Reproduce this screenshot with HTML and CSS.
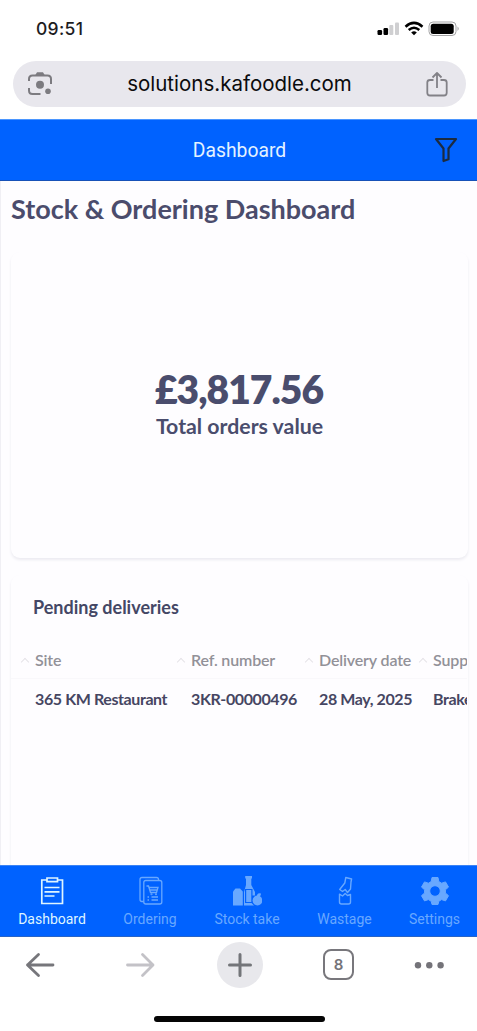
FILE: index.html
```html
<!DOCTYPE html>
<html lang="en">
<head>
<meta charset="utf-8">
<meta name="viewport" content="width=device-width, initial-scale=1">
<title>Dashboard</title>
<link rel="stylesheet" href="styles.css">
</head>
<body>
<div class="phone">
  <div class="status">
    <span class="clock">09:51</span>
    <svg class="signals" width="83" height="16" viewBox="0 0 83 16">
      <rect x="0.5" y="9" width="4.6" height="5" rx="1.2"/>
      <rect x="6.5" y="7" width="4.6" height="7" rx="1.2"/>
      <rect x="12.3" y="4" width="4" height="10" rx="1" fill="#cfcfd1"/>
      <rect x="18" y="1.5" width="4" height="12.5" rx="1" fill="#cfcfd1"/>
      <path d="M28.5 5.7Q37 -1.9 45.500 5.700M31.700 9Q37 4.500 42.300 9" fill="none" stroke="#000" stroke-width="2.500"/>
      <path d="M34.200 11.400Q37 9 39.800 11.400L37 14.300Z"/>
      <rect x="52" y="1" width="27" height="13.500" rx="4" fill="none" stroke="#a3a3a5"/>
      <rect x="53.700" y="2.700" width="23" height="10.200" rx="2.500"/>
      <path d="M80.500 5.500Q83 7.500 80.500 10Z" fill="#a3a3a5"/>
    </svg>
  </div>
  <div class="address">
    <svg width="26" height="26" viewBox="0 0 26 26" fill="none" stroke="#7c7b80" stroke-width="2">
      <path d="M2 10V8Q2 4.500 5.500 4.500H20.500Q24 4.500 24 8V13M2 17V19.500Q2 23 5.500 23H13.500"/>
      <path d="M8 4.500L10 1.200H16L18 4.500Z" fill="#7c7b80" stroke="none"/>
      <circle cx="13" cy="13.800" r="4" fill="#7c7b80" stroke="none"/>
      <circle cx="21" cy="20.300" r="2.800" fill="#7c7b80" stroke="none"/>
    </svg>
    <span class="url">solutions.kafoodle.com</span>
    <svg width="22" height="26" viewBox="0 0 22 26" fill="none" stroke="#828187" stroke-width="1.800" stroke-linejoin="round">
      <path d="M7.500 9H4Q1.300 9 1.300 11.500V21.700Q1.300 24.500 4 24.500H18Q20.700 24.500 20.700 21.700V11.500Q20.700 9 18 9H14.500M11 17V2.300M6.500 6.500L11 2L15.500 6.500"/>
    </svg>
  </div>
  <header class="topbar">
    <span class="topbar-title">Dashboard</span>
    <svg class="filter" width="24" height="26" viewBox="0 0 24 26" fill="none" stroke="#1c2b40" stroke-width="2.200" stroke-linejoin="round">
      <path d="M2 2H22L14.500 11.500V22.300L9.500 24V11.500Z"/>
    </svg>
  </header>
  <main class="content">
    <h1 class="title">Stock &amp; Ordering Dashboard</h1>
    <section class="card total">
      <div class="amount">£3,817.56</div>
      <div class="caption">Total orders value</div>
    </section>
    <section class="card pending">
      <h2 class="card-title">Pending deliveries</h2>
      <div class="table">
        <div class="row head">
          <span class="cell"><i class="sort"></i><span>Site</span></span>
          <span class="cell"><i class="sort"></i><span>Ref. number</span></span>
          <span class="cell"><i class="sort"></i><span>Delivery date</span></span>
          <span class="cell"><i class="sort"></i><span>Supplier</span></span>
        </div>
        <div class="row data">
          <span class="cell">365 KM Restaurant</span>
          <span class="cell">3KR-00000496</span>
          <span class="cell">28 May, 2025</span>
          <span class="cell">Brakes</span>
        </div>
      </div>
    </section>
  </main>
  <nav class="tabs">
    <div class="tab active">
      <svg width="30" height="30" viewBox="0 0 30 30" fill="none" stroke="currentColor" stroke-width="1.700">
        <path d="M10 4H4.800V27.500H25.500V4H20.500M10 2H20.500V5.700H10ZM7.500 11.500H22.500M7.500 15.800H22.500M7.500 20H17.500"/>
      </svg>
      <span>Dashboard</span>
    </div>
    <div class="tab">
      <svg class="ordering" width="30" height="30" viewBox="0 0 30 30" fill="none" stroke="currentColor" stroke-width="1.300">
        <path d="M7.800 25.500H6Q4 25.500 4 23.500V3.500Q4 1.500 6 1.500H20.500Q22.500 1.500 22.500 3.500V4.500"/>
        <rect x="7.800" y="4.500" width="18" height="23.500" rx="2"/>
        <path d="M10.500 10H12.500L14.500 16.500H20.500L22 11.500H13M14 14H21M11.500 21H13M15.500 21H22M11.500 24H13M15.500 24H22"/>
        <circle cx="15.500" cy="18.300" r=".4"/><circle cx="20" cy="18.300" r=".4"/>
      </svg>
      <span>Ordering</span>
    </div>
    <div class="tab">
      <svg width="30" height="30" viewBox="0 0 30 30" fill="currentColor">
        <path d="M1 29.500V15.500L3.500 12.500H8L10.800 15.500V29.500Z"/>
        <path d="M13.200 0H20V2L19.300 3V9L23 16V19.500H20.500V13H13V28.500H12V16L14 9V3L13.200 2Z"/>
        <path d="M14.200 14H19.300V26H14.200ZM12 27H19.500L22 29.500H12Z"/>
        <circle cx="25.500" cy="24.500" r="4.900"/>
        <path d="M25 21Q24.500 16.500 29 17.500Q29 21 25 21Z"/>
      </svg>
      <span>Stock take</span>
    </div>
    <div class="tab">
      <svg width="30" height="30" viewBox="0 0 30 30" fill="none" stroke="currentColor" stroke-width="1.400" stroke-linejoin="round">
        <path d="M15.800 1.500L21.600 3L21 6L20.500 13L17.500 16.500L15.200 13.500L12.500 15.500L9.700 13.500L14.800 7Z"/>
        <path d="M9.500 18.200L12.500 20L15.200 17.500L17.500 19.500L20.500 18.500V26Q20.500 28 18.500 28H11.500Q9.500 28 9.500 26Z"/>
      </svg>
      <span>Wastage</span>
    </div>
    <div class="tab">
      <svg width="30" height="30" viewBox="0 0 30 30" fill="currentColor" fill-rule="evenodd">
        <path stroke="currentColor" stroke-width="1" stroke-linejoin="round" d="M12 1.500H18L18.800 5.600L21.600 7.200L25.500 5.900L28.500 11.100L25.400 13.800V17L28.500 19.700L25.500 24.900L21.600 23.600L18.800 25.200L18 28.500H12L11.200 25.200L8.400 23.600L4.500 24.900L1.500 19.700L4.600 17V13.800L1.500 11.100L4.500 5.900L8.400 7.200L11.200 5.600ZM15 9.700A5.300 5.300 0 1 0 15 20.300A5.300 5.300 0 1 0 15 9.700Z"/>
      </svg>
      <span>Settings</span>
    </div>
  </nav>
  <div class="toolbar">
    <svg width="48" height="46" viewBox="0 0 48 46" fill="none" stroke="#76767b" stroke-width="2.800" stroke-linecap="round" stroke-linejoin="round"><path d="M37 23H11.500M22.500 12.500L11.500 23L22.500 33.500"/></svg>
    <svg width="48" height="46" viewBox="0 0 48 46" fill="none" stroke="#c3c2c7" stroke-width="2.800" stroke-linecap="round" stroke-linejoin="round"><path d="M11.500 23H37M26.500 12.500L37 23L26.500 33.500"/></svg>
    <svg width="48" height="46" viewBox="0 0 48 46" fill="none" stroke="#737579" stroke-width="3" stroke-linecap="round"><circle cx="24" cy="23" r="23" fill="#e8e8ec" stroke="none"/><path d="M13.500 23H34.500M24 12.500V33.500"/></svg>
    <div class="tabcount">8</div>
    <svg width="48" height="46" viewBox="0 0 48 46" fill="#747379"><circle cx="13" cy="23.300" r="3.200"/><circle cx="24.300" cy="23.300" r="3.200"/><circle cx="35.600" cy="23.300" r="3.200"/></svg>
  </div>
  <div class="home"></div>
</div>
</body>
</html>
```
FILE: styles.css
```css
* { box-sizing: border-box; }
body { margin: 0; background: #fff; font-family: Lato, sans-serif; }
.phone { width: 477px; height: 1031px; overflow: hidden; display: flex; flex-direction: column; background: #fff; }
.phone > * { flex-shrink: 0; }
svg { display: block; flex: none; }

.status { height: 61px; padding: 18px 17px 0 36px; display: flex; justify-content: space-between; }
.clock { font: 500 17.500px/22px Inter, sans-serif; letter-spacing: 0.3px; color: #1d1d1f; }
.signals { margin-top: 3px; }

.address { height: 46px; margin: 0 11px 12px 13px; padding: 0 18px 0 14px; border-radius: 23px; background: #e8e7ed; display: flex; align-items: center; justify-content: space-between; }
.url { font: 400 20.500px/24px Inter, sans-serif; color: #0b0b0d; white-space: nowrap; }

.topbar { height: 62px; background: #0062ff; border-top: 1px solid #4b96ff; border-bottom: 1px solid #1752b8; display: grid; grid-template-columns: 51px 1fr 49px; align-items: center; }
.topbar-title { grid-column: 2; padding-top: 1px; text-align: center; font: 400 19.300px/24px Roboto, sans-serif; color: #e4f2ff; }
.filter { margin-left: 6px; }

.content { height: 684px; overflow: hidden; padding: 12px 8px 0 10px; border-left: 1px solid #f0eff4; background: #fefdff; }
.title { margin: 0; height: 59px; font-weight: 700; font-size: 27px; line-height: 32px; color: #4b4c6c; white-space: nowrap; }
.card { width: 457px; border-radius: 9px; background: #fefdff; box-shadow: 0 2px 3px #ecebf1; }
.total { height: 306px; padding-top: 113px; text-align: center; color: #4a4d6d; }
.amount { font-weight: 800; font-size: 39px; line-height: 48px; letter-spacing: -1px; text-indent: -1px; }
.caption { font-weight: 700; font-size: 21.300px; line-height: 26px; }
.pending { margin-top: 17px; height: 310px; padding-top: 19px; }
.card-title { margin: 0 0 21px 22px; font-weight: 700; font-size: 18px; line-height: 26px; color: #444765; }
.table { margin-right: 1px; overflow: hidden; }
.row { display: grid; grid-template-columns: 156px 128px 114px 100px; padding-left: 10px; align-items: center; white-space: nowrap; }
.cell { display: flex; align-items: center; }
.head { height: 38px; border-bottom: 1px solid #f9f8fb; font-weight: 600; font-size: 16px; letter-spacing: -0.150px; color: #929198; }
.data { height: 39px; font-weight: 700; font-size: 16px; letter-spacing: -0.400px; color: #464662; }
.data .cell { padding-left: 14px; }
.sort { width: 6px; height: 6px; margin: 4px 7px 0 1px; border: solid #e5e3e8; border-width: 1px 0 0 1px; transform: rotate(45deg); }

.tabs { height: 72px; background: #0062ff; border-top: 1px solid #3b83f5; border-bottom: 1px solid #2764c8; display: grid; grid-template-columns: 102px 94px 100px 95px 85px; padding-left: 1px; }
.tab { display: flex; flex-direction: column; align-items: center; padding-top: 10px; gap: 4px; font: 400 14px/18px Roboto, sans-serif; color: #68a8ff; white-space: nowrap; }
.active { color: #def5ff; }
.ordering { margin-left: 2px; }

.toolbar { height: 56px; padding: 5px 0 0 16px; display: grid; grid-template-columns: 100px 99.500px 99.500px 89.500px 48px; align-items: start; }
.tabcount { width: 31px; height: 31px; margin: 7px 0 0 8px; border: 2.500px solid #78777c; border-radius: 8px; text-align: center; font: 600 15px/27px Inter, sans-serif; color: #747378; }
.home { width: 171px; height: 6px; margin: 23px 0 0 154px; border-radius: 3px; background: #050505; }
```
